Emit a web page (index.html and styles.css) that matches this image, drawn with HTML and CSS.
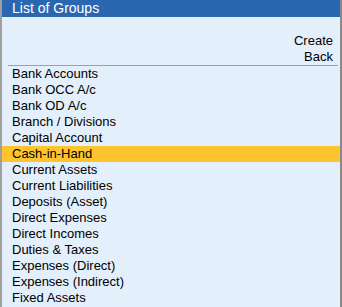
FILE: index.html
```html
<!DOCTYPE html>
<html>
<head>
<meta charset="utf-8">
<link rel="stylesheet" href="styles.css">
</head>
<body>
<div class="panel">
  <div class="title">List of Groups</div>
  <div class="actions">
    <div>Create</div>
    <div>Back</div>
  </div>
  <div class="sep"></div>
  <ul class="list">
    <li>Bank Accounts</li>
    <li>Bank OCC A/c</li>
    <li>Bank OD A/c</li>
    <li>Branch / Divisions</li>
    <li>Capital Account</li>
    <li class="sel">Cash-in-Hand</li>
    <li>Current Assets</li>
    <li>Current Liabilities</li>
    <li>Deposits (Asset)</li>
    <li>Direct Expenses</li>
    <li>Direct Incomes</li>
    <li>Duties &amp; Taxes</li>
    <li>Expenses (Direct)</li>
    <li>Expenses (Indirect)</li>
    <li>Fixed Assets</li>
  </ul>
</div>
</body>
</html>
```

FILE: styles.css
```css
html, body {
  margin: 0;
  padding: 0;
  background: #e3effa;
  overflow: hidden;
}
.panel {
  width: 338px;
  height: 307px;
  border-left: 2px solid #a0a0a0;
  border-right: 2px solid #8a8a8a;
  background: #e3effa;
  font-family: "Liberation Sans", Arial, sans-serif;
  font-size: 13px;
  color: #000;
  overflow: hidden;
}
.title {
  height: 17px;
  line-height: 16px;
  background: #2b67b0;
  color: #fff;
  font-size: 14px;
  padding-left: 10px;
}
.actions {
  display: flex;
  flex-direction: column;
  align-items: flex-end;
  padding-top: 16px;
  padding-right: 7px;
  line-height: 16px;
}
.sep {
  height: 1px;
  background: #a0a0a0;
  margin: 0 2px 0 6px;
}
.list {
  list-style: none;
  margin: 0;
  padding: 0;
  line-height: 16px;
}
.list li {
  padding-left: 10px;
  height: 16px;
}
.list li.sel {
  background: #fec42e;
}
```
